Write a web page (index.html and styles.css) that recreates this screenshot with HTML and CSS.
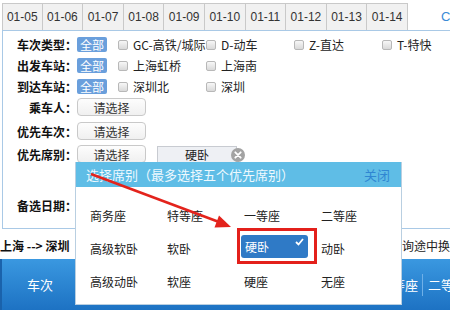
FILE: index.html
```html
<!DOCTYPE html>
<html lang="zh-CN">
<head>
<meta charset="utf-8">
<link rel="stylesheet" href="styles.css">
</head>
<body>
<div class="page">
  <div class="tabs">
    <div class="tab">01-05</div>
    <div class="tab">01-06</div>
    <div class="tab">01-07</div>
    <div class="tab">01-08</div>
    <div class="tab">01-09</div>
    <div class="tab">01-10</div>
    <div class="tab">01-11</div>
    <div class="tab">01-12</div>
    <div class="tab">01-13</div>
    <div class="tab">01-14</div>
    <div class="tab-active">C</div>
  </div>

  <div class="panel">
    <div class="row r1">
      <div class="label">车次类型：</div>
      <span class="all">全部</span>
      <div class="checks">
        <span class="chk"><i class="box"></i>GC-高铁/城际</span>
        <span class="chk"><i class="box"></i>D-动车</span>
        <span class="chk"><i class="box"></i>Z-直达</span>
        <span class="chk"><i class="box"></i>T-特快</span>
      </div>
    </div>
    <div class="row r2">
      <div class="label">出发车站：</div>
      <span class="all">全部</span>
      <div class="checks">
        <span class="chk"><i class="box"></i>上海虹桥</span>
        <span class="chk"><i class="box"></i>上海南</span>
      </div>
    </div>
    <div class="row r3">
      <div class="label">到达车站：</div>
      <span class="all">全部</span>
      <div class="checks">
        <span class="chk"><i class="box"></i>深圳北</span>
        <span class="chk"><i class="box"></i>深圳</span>
      </div>
    </div>
    <div class="row r4">
      <div class="label">乘车人：</div>
      <span class="pick">请选择</span>
    </div>
    <div class="row r5">
      <div class="label">优先车次：</div>
      <span class="pick">请选择</span>
    </div>
    <div class="row r6">
      <div class="label">优先席别：</div>
      <span class="pick">请选择</span>
      <span class="chip">硬卧<i class="chip-x"><svg width="14" height="14" viewBox="0 0 14 14"><circle cx="7" cy="7" r="7" fill="#a3a3a3"/><path d="M4.3 4.3 L9.7 9.7 M9.7 4.3 L4.3 9.7" stroke="#fff" stroke-width="1.8" stroke-linecap="round"/></svg></i></span>
    </div>
    <div class="row r7">
      <div class="label">备选日期：</div>
    </div>
  </div>

  <div class="route">
    <span class="route-l">上海 --&gt; 深圳</span>
    <span class="route-r">询途中换乘</span>
  </div>

  <div class="thead">
    <div class="th-first">车次</div>
    <div class="th-mid">一等座</div>
    <div class="th-sep"></div>
    <div class="th-last">二等座</div>
  </div>

  <div class="popup">
    <div class="popup-head">
      <span class="popup-title">选择席别（最多选择五个优先席别）</span>
      <span class="popup-close">关闭</span>
    </div>
    <div class="seat-grid">
      <span class="seat">商务座</span>
      <span class="seat">特等座</span>
      <span class="seat">一等座</span>
      <span class="seat">二等座</span>
      <span class="seat">高级软卧</span>
      <span class="seat">软卧</span>
      <span class="seat"><span class="seat-on">硬卧<svg class="tick" width="9" height="8" viewBox="0 0 9 8"><path d="M1 4 L3.5 6.5 L8 1" fill="none" stroke="#fff" stroke-width="1.8"/></svg></span></span>
      <span class="seat">动卧</span>
      <span class="seat">高级动卧</span>
      <span class="seat">软座</span>
      <span class="seat">硬座</span>
      <span class="seat">无座</span>
    </div>
  </div>

  <div class="redbox"></div>

  <svg class="arrow" width="450" height="312" viewBox="0 0 450 312">
    <line x1="91" y1="174" x2="219" y2="222" stroke="#e3231c" stroke-width="2.6"/>
    <polygon points="231,227 214.5,227.5 219,215.5" fill="#e3231c"/>
  </svg>
</div>
</body>
</html>
```

FILE: styles.css
```css
* { box-sizing: border-box; }
html, body { margin: 0; padding: 0; background: #fff; }
body {
  font-family: "Noto Sans CJK SC", "Microsoft YaHei", sans-serif;
  font-size: 12px;
  color: #222;
}
.page {
  position: relative;
  width: 450px;
  height: 312px;
  overflow: hidden;
}

/* date tabs */
.tabs {
  display: flex;
  height: 30px;
  padding: 3px 0 0 2px;
}
.tab {
  width: 40.6px;
  flex: none;
  height: 27px;
  border: 1px solid #c9c9c9;
  border-left: none;
  border-bottom: none;
  background: #f1f1f1;
  font-family: "Liberation Sans", Arial, sans-serif;
  font-size: 12px;
  color: #333;
  display: flex;
  align-items: center;
  justify-content: center;
}
.tab:first-child { border-left: 1px solid #c9c9c9; }
.tab-active {
  flex: 1;
  height: 27px;
  color: #3a8ad6;
  font-family: "Liberation Sans", Arial, sans-serif;
  font-size: 13px;
  display: flex;
  align-items: center;
  padding-left: 33px;
}

/* main panel */
.panel {
  margin-left: 2px;
  width: 460px;
  height: 199px;
  border: 1px solid #a9c9e6;
  border-right: none;
  padding-top: 3px;
}
.row {
  display: flex;
  align-items: center;
  height: 21px;
}
.r4 { height: 20px; }
.r5 { height: 20px; margin-top: 4px; }
.r6 { height: 20px; margin-top: 3px; }
.r7 { height: 20px; margin-top: 31px; }
.label {
  width: 74px;
  flex: none;
  text-align: right;
  font-weight: bold;
  color: #111;
  font-size: 12px;
}
.all {
  width: 30px;
  height: 15px;
  line-height: 15px;
  text-align: center;
  background: #6a9fdc;
  color: #fff;
  border-radius: 2px;
  font-size: 12px;
  flex: none;
}
.checks {
  display: flex;
  padding-left: 11px;
}
.chk {
  width: 88px;
  flex: none;
  display: flex;
  align-items: center;
  color: #222;
}
.box {
  width: 10px;
  height: 10px;
  border: 1px solid #b8b8b8;
  border-radius: 2px;
  background: linear-gradient(#f7f7f7, #d9d9d9);
  margin-right: 5px;
  flex: none;
}
.pick {
  width: 69px;
  height: 18px;
  border: 1px solid #c9c9c9;
  border-radius: 4px;
  background: linear-gradient(#fdfdfd, #f0f0f0);
  display: flex;
  align-items: center;
  justify-content: center;
  color: #333;
  flex: none;
}
.chip {
  position: relative;
  margin-left: 11px;
  width: 80px;
  height: 17px;
  border: 1px solid #c8cbd1;
  background: #eef0f4;
  display: flex;
  align-items: center;
  justify-content: center;
  color: #222;
  flex: none;
}
.chip-x {
  position: absolute;
  right: -9px;
  top: 1px;
  width: 14px;
  height: 14px;
  display: block;
}
.chip-x svg { display: block; }

/* route line */
.route {
  display: flex;
  justify-content: space-between;
  height: 30px;
  align-items: center;
  padding-top: 2px;
}
.route-l { font-weight: bold; color: #111; }
.route-r { color: #222; white-space: nowrap; margin-right: -12px; }

/* table header */
.thead {
  display: flex;
  align-items: center;
  height: 51px;
  background: linear-gradient(#3a98e0, #1d72c3);
  border-left: 2px solid #1a62ab;
  color: #fff;
  font-size: 13px;
  white-space: nowrap;
}
.th-first { width: 344px; flex: none; padding-left: 25px; }
.th-mid { width: 72px; flex: none; text-align: right; }
.th-sep { width: 1px; flex: none; height: 22px; background: #6fb0e8; margin: 0 5px 0 4px; }
.th-last { flex: none; }

/* popup */
.popup {
  position: absolute;
  left: 75px;
  top: 162px;
  width: 327px;
  height: 143px;
  background: #fff;
  border: 1px solid #b9cfe1;
  border-top: none;
}
.popup-head {
  height: 25px;
  background: #5fbde6;
  display: flex;
  align-items: center;
  justify-content: space-between;
  padding: 0 11px 0 10px;
  font-size: 13px;
}
.popup-title { color: #eef9fe; }
.popup-close { color: #2f86d2; }
.seat-grid {
  display: grid;
  grid-template-columns: repeat(4, 77px);
  grid-auto-rows: 33px;
  align-items: center;
  padding: 12px 0 0 14px;
}
.seat { color: #222; font-size: 12px; }
.seat-on {
  position: relative;
  display: flex;
  align-items: center;
  margin-left: -3px;
  width: 67px;
  height: 23px;
  padding-left: 4px;
  background: #2f7ac6;
  border-radius: 3px;
  color: #fff;
  margin-top: -4px;
}
.tick { position: absolute; right: 4px; top: 3px; }

.redbox {
  position: absolute;
  left: 237px;
  top: 228px;
  width: 80px;
  height: 36px;
  border: 3px solid #e3201b;
}
.arrow {
  position: absolute;
  left: 0;
  top: 0;
  pointer-events: none;
}
```
